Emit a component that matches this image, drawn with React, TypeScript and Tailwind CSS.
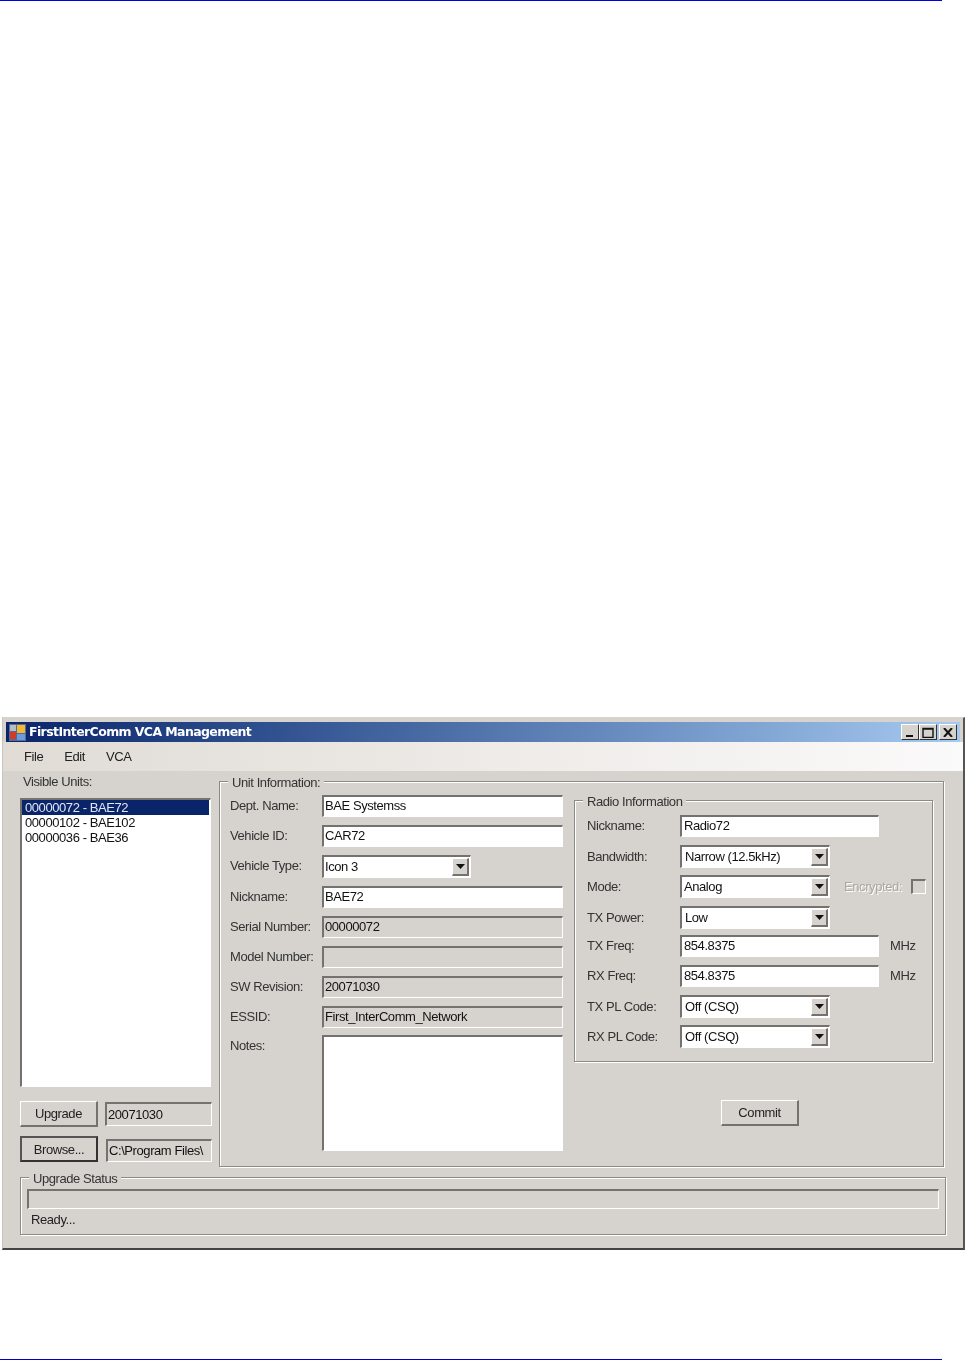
const font = "font-['Liberation_Sans',Arial,sans-serif]";

// sunken 2px field, like the WinForms textbox
const sunken = "border-t-2 border-l-2 border-t-[#74726e] border-l-[#74726e] border-b border-r border-b-white border-r-white";

const Field = ({ value, width, height = "h-[22px]", disabled, pad = "pl-px" }: { value?: string; width: string; height?: string; disabled?: boolean; pad?: string }) => (
  <div className={`${sunken} ${width} ${height} ${pad} ${disabled ? "bg-[#d6d3ce]" : "bg-white"} leading-[18px] text-[#111] overflow-hidden whitespace-nowrap`}>
    {value}
  </div>
);

const Combo = ({ value, width, pad = "pl-[3px]" }: { value: string; width: string; pad?: string }) => (
  <div className={`${sunken} ${width} ${pad} h-[23px] bg-white flex items-center justify-between text-[#111]`}>
    <span className="whitespace-nowrap">{value}</span>
    <span className="w-[17px] h-[18px] mr-px bg-[#d6d3ce] border-t border-l border-white border-r-2 border-b-2 border-r-[#74726e] border-b-[#74726e] flex items-center justify-center">
      <svg width="9" height="5" viewBox="0 0 9 5"><path d="M0 0h9L4.5 5z" fill="#111" /></svg>
    </span>
  </div>
);

const Button = ({ label, dflt, width = "w-[78px]" }: { label: string; dflt?: boolean; width?: string }) => (
  <div className={`${width} h-[26px] pt-px bg-[#d6d3ce] flex items-center justify-center text-[#222] ${dflt ? "border-2 border-[#333] border-t-[#555] border-l-[#555]" : "border-t border-l border-t-white border-l-white border-r-2 border-b-2 border-r-[#74726e] border-b-[#74726e]"}`}>
    {label}
  </div>
);

const Group = ({ title, className, children }: { title: string; className: string; children?: React.ReactNode }) => (
  <div className={`relative border border-[#8c8a85] shadow-[inset_1px_1px_0_#fff,1px_1px_0_#fff] ${className}`}>
    <span className="absolute -top-[8px] left-2 bg-[#d6d3ce] px-1 leading-[18px] text-[#333] whitespace-nowrap">{title}</span>
    {children}
  </div>
);

const Row = ({ label, labelClass = "w-[92px] -mt-px", className, children }: { label: string; labelClass?: string; className?: string; children: React.ReactNode }) => (
  <div className={`flex items-center ${className ?? ""}`}>
    <span className={`${labelClass} shrink-0 text-[#333] whitespace-nowrap`}>{label}</span>
    {children}
  </div>
);

const WinButton = ({ children }: { children: React.ReactNode }) => (
  <span className="w-[18px] h-[16px] bg-[#d6d3ce] border-t border-l border-white border-r border-b border-r-[#333] border-b-[#333] flex items-center justify-center">
    {children}
  </span>
);

export default function App() {
  return (
    <div className={`${font} w-[965px] h-[1360px] bg-white flex flex-col text-[13px]`}>
      <div className="h-px w-[942px] bg-[#0000e6]" />

      <div className="mt-[716px] ml-0.5 w-[963px] h-[533px] bg-[#d6d3ce] border-t-[1px] border-t-[#d6d3ce] border-l border-l-[#c8c5be] border-r-2 border-r-[#555] border-b-2 border-b-[#444] flex flex-col pt-1 tracking-[-0.42px] blur-[0.35px]">
        {/* title bar */}
        <div className="mx-[3px] h-[20px] shrink-0 bg-gradient-to-r from-[#0a246a] to-[#a6caf0] flex items-center pl-[3px] pr-[3px]">
          <svg width="17" height="17" viewBox="0 0 17 17" className="shrink-0">
            <rect width="17" height="17" fill="#5a6a8a" />
            <rect x="1" y="1" width="6" height="6" fill="#b8bcc4" />
            <rect x="8" y="1" width="8" height="8" fill="#f2b838" />
            <rect x="1" y="8" width="6" height="7" fill="#d03c2c" />
            <rect x="8" y="10" width="8" height="6" fill="#6a9ce4" />
          </svg>
          <span className="ml-[3px] text-white font-bold font-['DejaVu_Sans',sans-serif] text-[12.5px] tracking-[-0.6px] whitespace-nowrap">FirstInterComm VCA Management</span>
          <div className="ml-auto flex items-center">
            <WinButton><svg width="10" height="10" viewBox="0 0 10 10"><path d="M1 8h7v2H1z" fill="#111" /></svg></WinButton>
            <WinButton><svg width="12" height="11" viewBox="0 0 12 11"><path d="M1 1.5h10v9H1z M1 2h10" fill="none" stroke="#111" strokeWidth="1.4" /></svg></WinButton>
            <span className="w-0.5" />
            <WinButton><svg width="10" height="9" viewBox="0 0 10 9"><path d="M1 0l8 9M9 0L1 9" stroke="#111" strokeWidth="2" /></svg></WinButton>
          </div>
        </div>

        {/* menu strip */}
        <div className="h-[29px] shrink-0 bg-gradient-to-r from-[#e0dbd5] to-[#fbfafa] flex items-center gap-[21px] pl-[21px] pt-px text-[#222]">
          <span>File</span>
          <span>Edit</span>
          <span>VCA</span>
        </div>

        <div className="flex-1 flex pl-[17px]">
          {/* left column */}
          <div className="w-[192px] shrink-0 pt-0.5">
            <div className="leading-[18px] pl-[3px] text-[#333]">Visible Units:</div>
            <div className={`${sunken} mt-[7px] mr-px h-[289px] bg-white pr-px text-[#111] leading-[15px]`}>
              <div className="bg-[#0a246a] text-[#dfe5f2] pl-[3px]">00000072 - BAE72</div>
              <div className="pl-[3px]">00000102 - BAE102</div>
              <div className="pl-[3px]">00000036 - BAE36</div>
            </div>
            <div className="mt-[14px] flex items-center justify-between">
              <Button label="Upgrade" />
              <Field value="20071030" width="w-[107px]" height="h-[24px]" pad="pl-px pt-0.5" disabled />
            </div>
            <div className="mt-[9px] flex items-center justify-between">
              <Button label="Browse..." dflt />
              <div className="mt-[3px]">
                <Field value="C:\Program Files\" width="w-[106px]" height="h-[23px]" pad="pl-px pt-px" disabled />
              </div>
            </div>
          </div>

          {/* unit information */}
          <Group title="Unit Information:" className="ml-[7px] mt-[10px] w-[725px] h-[386px] flex pl-[10px] pt-[13px]">
            <div className="w-[334px] shrink-0 flex flex-col gap-2">
              <Row label="Dept. Name:"><Field value="BAE Systemss" width="w-[241px]" /></Row>
              <Row label="Vehicle ID:"><Field value="CAR72" width="w-[241px]" /></Row>
              <Row label="Vehicle Type:"><Combo value="Icon 3" width="w-[149px]" pad="pl-px" /></Row>
              <Row label="Nickname:"><Field value="BAE72" width="w-[241px]" /></Row>
              <Row label="Serial Number:"><Field value="00000072" width="w-[241px]" disabled /></Row>
              <Row label="Model Number:"><Field width="w-[241px]" disabled /></Row>
              <Row label="SW Revision:"><Field value="20071030" width="w-[241px]" disabled /></Row>
              <Row label="ESSID:"><Field value="First_InterComm_Network" width="w-[241px]" disabled /></Row>
              <div className="-mt-px flex items-start">
                <span className="w-[92px] shrink-0 text-[#333] leading-[22px]">Notes:</span>
                <Field width="w-[241px]" height="h-[116px]" />
              </div>
            </div>

            <div className="ml-[10px] flex flex-col items-center">
              <Group title="Radio Information" className="mt-[5px] w-[359px] h-[262px] flex flex-col pl-3 pt-[14px]">
                <Row label="Nickname:" labelClass="w-[93px]"><Field value="Radio72" width="w-[199px]" pad="pl-0.5" /></Row>
                <Row label="Bandwidth:" labelClass="w-[93px]" className="mt-2"><Combo value="Narrow (12.5kHz)" width="w-[150px]" /></Row>
                <Row label="Mode:" labelClass="w-[93px]" className="mt-[7px]">
                  <Combo value="Analog" width="w-[150px]" pad="pl-0.5" />
                  <span className="ml-[14px] text-[#a9a7a1] [text-shadow:1px_1px_0_#fff]">Encrypted:</span>
                  <span className={`${sunken} ml-[9px] w-[15px] h-[15px]`} />
                </Row>
                <Row label="TX Power:" labelClass="w-[93px]" className="mt-2"><Combo value="Low" width="w-[150px]" /></Row>
                <Row label="TX Freq:" labelClass="w-[93px]" className="mt-1.5"><Field value="854.8375" width="w-[199px]" pad="pl-0.5" /><span className="ml-[11px] text-[#333]">MHz</span></Row>
                <Row label="RX Freq:" labelClass="w-[93px]" className="mt-2"><Field value="854.8375" width="w-[199px]" pad="pl-0.5" /><span className="ml-[11px] text-[#333]">MHz</span></Row>
                <Row label="TX PL Code:" labelClass="w-[93px]" className="mt-2"><Combo value="Off (CSQ)" width="w-[150px]" /></Row>
                <Row label="RX PL Code:" labelClass="w-[93px]" className="mt-[7px]"><Combo value="Off (CSQ)" width="w-[150px]" /></Row>
              </Group>
              <div className="mt-[38px] ml-[13px]">
                <Button label="Commit" />
              </div>
            </div>
          </Group>
        </div>

        {/* upgrade status */}
        <Group title="Upgrade Status" className="mx-[17px] mb-[13px] h-[58px] shrink-0 px-1.5 pt-[11px]">
          <div className={`${sunken} h-[20px]`} />
          <div className="mt-0.5 pl-1 leading-[18px] text-[#222]">Ready...</div>
        </Group>
      </div>

      <div className="mt-auto h-px w-[942px] bg-[#0000c8]" />
    </div>
  );
}
